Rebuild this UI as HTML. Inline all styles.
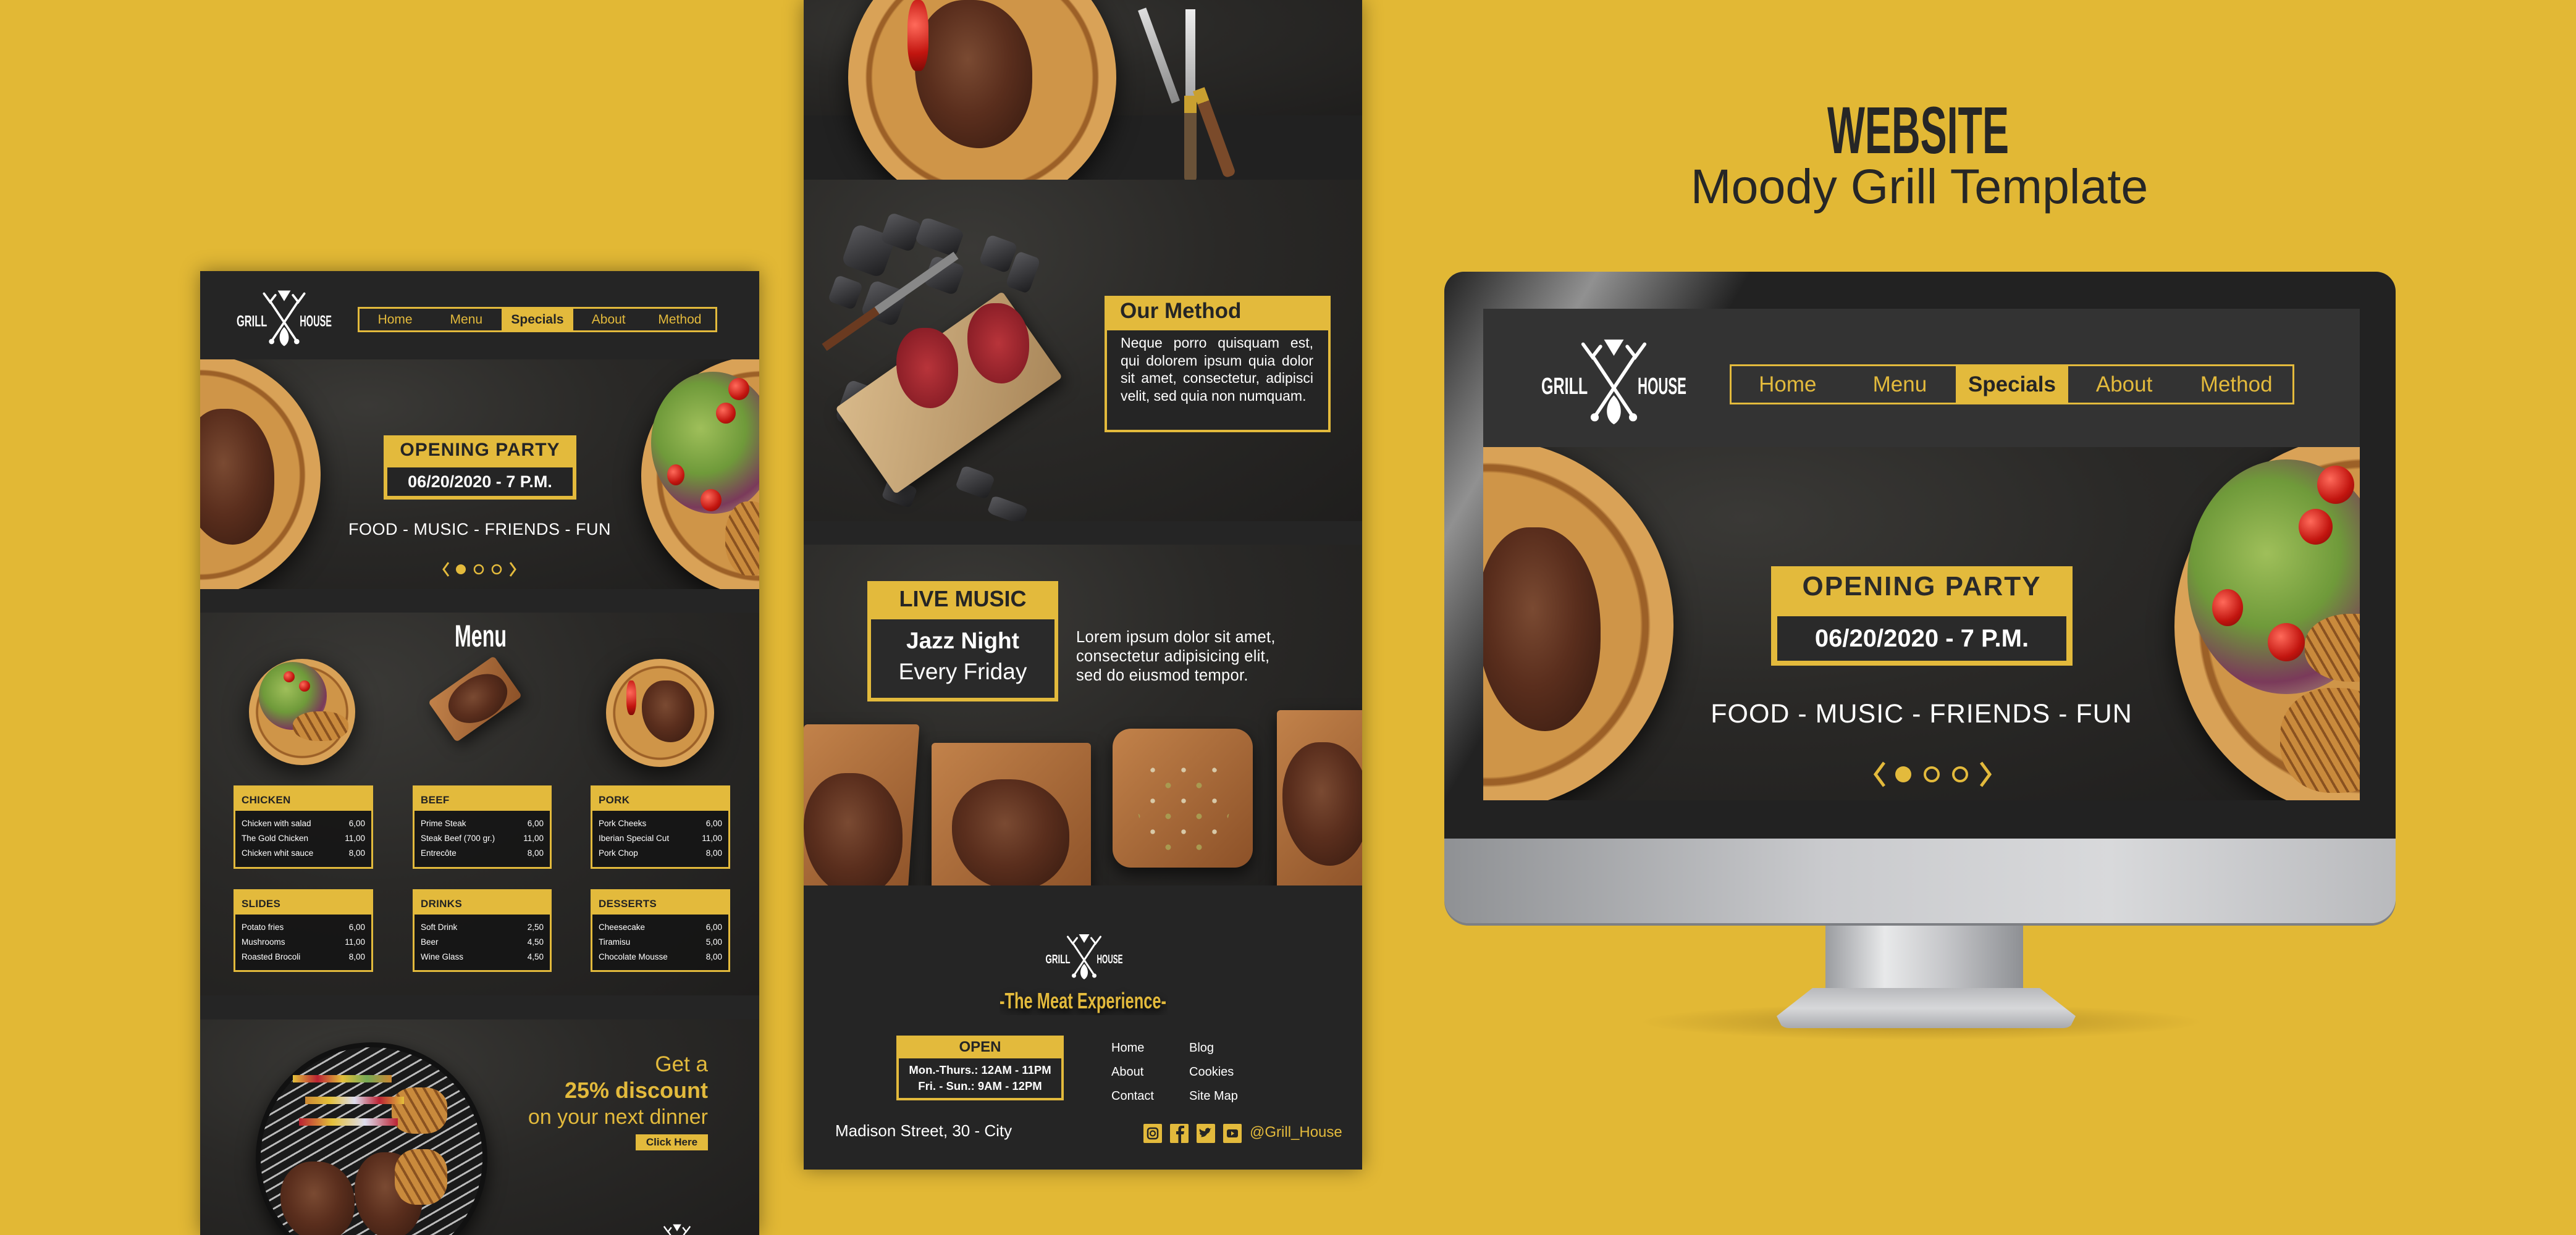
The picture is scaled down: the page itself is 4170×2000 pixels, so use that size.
<!DOCTYPE html>
<html><head><meta charset="utf-8">
<style>
*{margin:0;padding:0;box-sizing:border-box}
body{width:4170px;height:2000px;background:#e2b835;position:relative;overflow:hidden;font-family:"Liberation Sans",sans-serif}
.a{position:absolute}
.dark{background:#252525}
.tex{background:radial-gradient(ellipse at 30% 20%,#3a3936 0,#2a2927 45%,#1f1e1d 100%)}
.plate{position:absolute;border-radius:50%;background:radial-gradient(circle,#cf9548 0 58%,#9c6027 59% 61%,#d9a257 62% 86%,#b97a35 88% 96%,#8a5320 100%);box-shadow:0 12px 40px rgba(0,0,0,.7)}
.meat{position:absolute;border-radius:42% 50% 45% 55%;background:radial-gradient(ellipse at 45% 40%,#7a4a32 0,#5a2e1d 45%,#34190f 100%)}
.salad{position:absolute;border-radius:50%;background:radial-gradient(circle at 40% 40%,#9fbf5a 0,#6f9a3a 40%,#7a3a5a 70%,#c7c08a 100%)}
.tom{position:absolute;border-radius:50%;background:radial-gradient(circle at 35% 35%,#ff6a5a,#c2150f 60%,#7a0a06)}
.chick{position:absolute;border-radius:45%;background:repeating-linear-gradient(60deg,#c98a3c 0 10px,#8a5220 10px 14px)}
.y{color:#e3ba3c}
.ybg{background:#e3ba3c}
.card{position:absolute;border:3px solid #e3ba3c;background:rgba(20,20,20,.85)}
.card .h{background:#e3ba3c;height:38px;font-weight:bold;font-size:17px;color:#222;padding:11px 0 0 10px;letter-spacing:.3px}
.card .r{display:flex;justify-content:space-between;color:#fff;font-size:13.5px;line-height:24px;padding:0 10px}
.card .b{padding-top:9px}
.nav{position:absolute;border:3px solid #e3ba3c;display:flex;align-items:center;color:#e3ba3c}
.nav span{flex:1;text-align:center}
.nav .s{background:#e3ba3c;color:#252525;font-weight:bold;height:100%;display:flex;align-items:center;justify-content:center}
.ctr{text-align:center}
.board{position:absolute;background:linear-gradient(135deg,#c2824a,#8c5128);border-radius:6px;box-shadow:0 10px 25px rgba(0,0,0,.6)}
.coal{position:absolute;background:linear-gradient(135deg,#5a5a5e,#1c1c1e);border-radius:20%;transform:rotate(20deg)}
</style></head><body>

<!-- ================= LEFT PANEL ================= -->
<div class="a dark" style="left:324px;top:439px;width:905px;height:1561px;box-shadow:0 0 30px rgba(0,0,0,.4);overflow:hidden">
  <svg class="a" style="left:59px;top:30px" width="154" height="93" viewBox="0 0 250 150">
    <g stroke="#fff" stroke-width="6" fill="none" stroke-linecap="round">
      <line x1="88" y1="30" x2="158" y2="135"/><line x1="162" y1="30" x2="92" y2="135"/>
      <path d="M72 10 L88 32 L102 14"/><path d="M148 14 L162 32 L178 10"/>
    </g>
    <circle cx="92" cy="136" r="7" fill="#fff"/><circle cx="158" cy="136" r="7" fill="#fff"/>
    <path d="M108 2 L142 2 L125 30 Z" fill="#fff"/>
    <path d="M125 98 C108 115 110 140 125 148 C140 140 142 115 125 98 Z" fill="#fff"/>
    <text x="0" y="96" font-family="Liberation Sans" font-weight="bold" font-size="40" fill="#fff" textLength="80" lengthAdjust="spacingAndGlyphs">GRILL</text>
    <text x="166" y="96" font-family="Liberation Sans" font-weight="bold" font-size="40" fill="#fff" textLength="84" lengthAdjust="spacingAndGlyphs">HOUSE</text>
  </svg>
  <div class="nav" style="left:255px;top:58px;width:582px;height:41px;font-size:21px">
    <span>Home</span><span>Menu</span><span class="s">Specials</span><span>About</span><span>Method</span>
  </div>
  <div class="a tex" style="left:0;top:143px;width:905px;height:372px;overflow:hidden">
    <div class="plate" style="left:-195px;top:-8px;width:390px;height:390px"></div>
    <div class="meat" style="left:-30px;top:80px;width:150px;height:220px"></div>
    <div class="plate" style="left:714px;top:-6px;width:390px;height:390px"></div>
    <div class="salad" style="left:730px;top:20px;width:200px;height:230px"></div>
    <div class="tom" style="left:855px;top:30px;width:34px;height:36px"></div>
    <div class="tom" style="left:835px;top:70px;width:32px;height:34px"></div>
    <div class="tom" style="left:756px;top:170px;width:28px;height:34px"></div>
    <div class="tom" style="left:810px;top:210px;width:34px;height:36px"></div>
    <div class="chick" style="left:850px;top:230px;width:80px;height:120px"></div>
    <div class="a ybg" style="left:297px;top:123px;width:312px;height:104px"></div>
    <div class="a ctr" style="left:297px;top:130px;width:312px;font-size:30px;font-weight:bold;color:#252525;letter-spacing:1px">OPENING PARTY</div>
    <div class="a ctr" style="left:303px;top:175px;width:300px;height:46px;background:#252525;color:#fff;font-weight:bold;font-size:27px;line-height:46px">06/20/2020 - 7 P.M.</div>
    <div class="a ctr" style="left:0;top:260px;width:905px;color:#fff;font-size:27px;letter-spacing:.5px;font-weight:300">FOOD - MUSIC - FRIENDS - FUN</div>
    <svg class="a" style="left:390px;top:325px" width="125" height="30" viewBox="0 0 125 30">
      <path d="M12 4 L4 15 L12 26" stroke="#e3ba3c" stroke-width="3" fill="none"/>
      <circle cx="32" cy="15" r="8" fill="#e3ba3c"/>
      <circle cx="61" cy="15" r="7" stroke="#e3ba3c" stroke-width="2.5" fill="none"/>
      <circle cx="90" cy="15" r="7" stroke="#e3ba3c" stroke-width="2.5" fill="none"/>
      <path d="M112 4 L120 15 L112 26" stroke="#e3ba3c" stroke-width="3" fill="none"/>
    </svg>
  </div>
  <div class="a tex" style="left:0;top:553px;width:905px;height:620px;overflow:hidden">
    <svg class="a" style="left:412px;top:10px" width="85" height="55"><text x="0" y="45" font-family="Liberation Sans" font-weight="bold" font-size="50" fill="#fff" textLength="84" lengthAdjust="spacingAndGlyphs">Menu</text></svg>
    <div class="plate" style="left:79px;top:75px;width:172px;height:172px"></div>
    <div class="salad" style="left:95px;top:80px;width:110px;height:110px"></div>
    <div class="tom" style="left:135px;top:95px;width:18px;height:18px"></div>
    <div class="tom" style="left:160px;top:110px;width:18px;height:18px"></div>
    <div class="chick" style="left:150px;top:160px;width:90px;height:48px"></div>
    <div class="board" style="left:380px;top:100px;width:130px;height:80px;transform:rotate(-35deg)"></div>
    <div class="meat" style="left:400px;top:105px;width:100px;height:70px;transform:rotate(-35deg)"></div>
    <div class="plate" style="left:657px;top:75px;width:175px;height:175px"></div>
    <div class="meat" style="left:715px;top:110px;width:85px;height:100px"></div>
    <div class="tom" style="left:690px;top:110px;width:16px;height:56px;border-radius:40%"></div>

    <div class="card" style="left:54px;top:280px;width:226px;height:135px"><div class="h">CHICKEN</div><div class="b">
      <div class="r"><span>Chicken with salad</span><span>6,00</span></div><div class="r"><span>The Gold Chicken</span><span>11,00</span></div><div class="r"><span>Chicken whit sauce</span><span>8,00</span></div></div></div>
    <div class="card" style="left:344px;top:280px;width:225px;height:135px"><div class="h">BEEF</div><div class="b">
      <div class="r"><span>Prime Steak</span><span>6,00</span></div><div class="r"><span>Steak Beef (700 gr.)</span><span>11,00</span></div><div class="r"><span>Entrecôte</span><span>8,00</span></div></div></div>
    <div class="card" style="left:632px;top:280px;width:226px;height:135px"><div class="h">PORK</div><div class="b">
      <div class="r"><span>Pork Cheeks</span><span>6,00</span></div><div class="r"><span>Iberian Special Cut</span><span>11,00</span></div><div class="r"><span>Pork Chop</span><span>8,00</span></div></div></div>
    <div class="card" style="left:54px;top:448px;width:226px;height:134px"><div class="h">SLIDES</div><div class="b">
      <div class="r"><span>Potato fries</span><span>6,00</span></div><div class="r"><span>Mushrooms</span><span>11,00</span></div><div class="r"><span>Roasted Brocoli</span><span>8,00</span></div></div></div>
    <div class="card" style="left:344px;top:448px;width:225px;height:134px"><div class="h">DRINKS</div><div class="b">
      <div class="r"><span>Soft Drink</span><span>2,50</span></div><div class="r"><span>Beer</span><span>4,50</span></div><div class="r"><span>Wine Glass</span><span>4,50</span></div></div></div>
    <div class="card" style="left:632px;top:448px;width:226px;height:134px"><div class="h">DESSERTS</div><div class="b">
      <div class="r"><span>Cheesecake</span><span>6,00</span></div><div class="r"><span>Tiramisu</span><span>5,00</span></div><div class="r"><span>Chocolate Mousse</span><span>8,00</span></div></div></div>
  </div>
  <div class="a tex" style="left:0;top:1212px;width:905px;height:360px;overflow:hidden">
    <div class="a" style="left:90px;top:37px;width:375px;height:375px;border-radius:50%;background:repeating-linear-gradient(-30deg,#1a1a1a 0 12px,#bbb 12px 15px);border:8px solid #111;box-shadow:0 10px 30px rgba(0,0,0,.7)"></div>
    <div class="meat" style="left:130px;top:230px;width:120px;height:130px"></div>
    <div class="meat" style="left:250px;top:215px;width:110px;height:140px"></div>
    <div class="chick" style="left:310px;top:110px;width:90px;height:75px;border-radius:40%"></div>
    <div class="chick" style="left:315px;top:210px;width:85px;height:90px;border-radius:40%"></div>
    <div class="a" style="left:150px;top:90px;width:160px;height:12px;background:linear-gradient(90deg,#e4c03a,#b23,#e4c03a,#7a5,#c83)"></div>
    <div class="a" style="left:170px;top:125px;width:160px;height:12px;background:linear-gradient(90deg,#c83,#e4c03a,#dde,#b23,#e4c03a)"></div>
    <div class="a" style="left:160px;top:160px;width:160px;height:12px;background:linear-gradient(90deg,#b23,#e4c03a,#dde,#b23)"></div>
    <div class="a" style="left:500px;top:53px;width:322px;text-align:right;color:#e3ba3c;font-size:35px;line-height:40px">Get a</div>
    <div class="a" style="left:450px;top:94px;width:372px;text-align:right;color:#e3ba3c;font-size:36px;font-weight:bold;line-height:42px">25% discount</div>
    <div class="a" style="left:400px;top:138px;width:422px;text-align:right;color:#e3ba3c;font-size:34px;line-height:40px">on your next dinner</div>
    <div class="a ybg ctr" style="left:705px;top:186px;width:117px;height:26px;font-size:17px;font-weight:bold;line-height:26px;color:#222">Click Here</div>
    <svg class="a" style="left:722px;top:331px" width="100" height="60" viewBox="0 0 250 150">
      <g stroke="#fff" stroke-width="6" fill="none"><line x1="88" y1="30" x2="158" y2="135"/><line x1="162" y1="30" x2="92" y2="135"/><path d="M72 10 L88 32 L102 14"/><path d="M148 14 L162 32 L178 10"/></g>
      <path d="M108 2 L142 2 L125 30 Z" fill="#fff"/>
      <text x="0" y="96" font-family="Liberation Sans" font-weight="bold" font-size="40" fill="#fff" textLength="80" lengthAdjust="spacingAndGlyphs">GRILL</text>
      <text x="166" y="96" font-family="Liberation Sans" font-weight="bold" font-size="40" fill="#fff" textLength="84" lengthAdjust="spacingAndGlyphs">HOUSE</text>
    </svg>
  </div>
</div>

<!-- ================= MIDDLE PANEL ================= -->
<div class="a dark" style="left:1301px;top:0;width:904px;height:1894px;box-shadow:0 0 30px rgba(0,0,0,.4);overflow:hidden">
  <div class="a tex" style="left:0;top:0;width:904px;height:187px"></div>
  <div class="a" style="left:0;top:187px;width:904px;height:104px;background:#212121"></div>
  <div class="plate" style="left:72px;top:-90px;width:434px;height:430px"></div>
  <div class="meat" style="left:180px;top:0;width:190px;height:240px"></div>
  <div class="tom" style="left:168px;top:0;width:34px;height:115px;border-radius:40%"></div>
  <div class="a" style="left:568px;top:10px;width:14px;height:160px;background:linear-gradient(#ddd,#888);transform:rotate(-20deg)"></div>
  <div class="a" style="left:618px;top:15px;width:16px;height:140px;background:linear-gradient(#eee,#aaa)"></div>
  <div class="a" style="left:616px;top:155px;width:20px;height:140px;background:linear-gradient(#c9a030 0 20%,#6a5238 20%);border-radius:0 0 8px 8px"></div>
  <div class="a" style="left:655px;top:140px;width:20px;height:150px;background:linear-gradient(#c9a030 0 15%,#7a4a2a 15%);transform:rotate(-20deg);border-radius:0 0 8px 8px"></div>

  <div class="a tex" style="left:0;top:291px;width:904px;height:553px;overflow:hidden">
    <div class="coal" style="left:70px;top:80px;width:70px;height:70px"></div>
    <div class="coal" style="left:130px;top:60px;width:55px;height:50px"></div>
    <div class="coal" style="left:185px;top:70px;width:70px;height:45px"></div>
    <div class="coal" style="left:200px;top:130px;width:55px;height:50px"></div>
    <div class="coal" style="left:290px;top:95px;width:50px;height:50px"></div>
    <div class="coal" style="left:335px;top:120px;width:40px;height:60px"></div>
    <div class="coal" style="left:45px;top:160px;width:45px;height:45px"></div>
    <div class="coal" style="left:100px;top:170px;width:60px;height:60px"></div>
    <div class="coal" style="left:60px;top:330px;width:55px;height:70px"></div>
    <div class="coal" style="left:130px;top:490px;width:50px;height:35px"></div>
    <div class="coal" style="left:250px;top:470px;width:55px;height:40px"></div>
    <div class="coal" style="left:300px;top:520px;width:60px;height:30px"></div>
    <div class="a" style="left:10px;top:190px;width:260px;height:14px;background:linear-gradient(90deg,#6a3a20 0 40%,#888 40%);transform:rotate(-35deg)"></div>
    <div class="board" style="left:70px;top:260px;width:330px;height:170px;background:linear-gradient(135deg,#d8b98a,#a9875a);transform:rotate(-35deg)"></div>
    <div class="meat" style="left:150px;top:240px;width:100px;height:130px;background:radial-gradient(ellipse,#b8343a,#7a1620)"></div>
    <div class="meat" style="left:265px;top:200px;width:100px;height:130px;background:radial-gradient(ellipse,#b8343a,#7a1620)"></div>
    <div class="a ybg" style="left:487px;top:188px;width:366px;height:221px"></div>
    <div class="a" style="left:512px;top:193px;font-size:35px;font-weight:bold;color:#252525">Our Method</div>
    <div class="a" style="left:491px;top:244px;width:358px;height:161px;background:#252525;color:#fff;font-size:23px;line-height:28.5px;padding:6px 24px 0 22px;text-align:justify">Neque porro quisquam est, qui dolorem ipsum quia dolor sit amet, consectetur, adipisci velit, sed quia non numquam.</div>
  </div>
  <div class="a tex" style="left:0;top:882px;width:904px;height:552px;overflow:hidden">
    <div class="a ybg" style="left:103px;top:59px;width:309px;height:195px"></div>
    <div class="a ctr" style="left:103px;top:67px;width:309px;font-size:36px;font-weight:bold;color:#252525">LIVE MUSIC</div>
    <div class="a ctr" style="left:109px;top:121px;width:297px;height:127px;background:#2a2a2a;color:#fff;font-size:37px;line-height:50px;padding-top:10px"><b>Jazz Night</b><br>Every Friday</div>
    <div class="a" style="left:441px;top:135px;color:#fff;font-size:25.5px;line-height:31px;letter-spacing:.3px">Lorem ipsum dolor sit amet,<br>consectetur adipisicing elit,<br>sed do eiusmod tempor.</div>
    <div class="board" style="left:-10px;top:291px;width:187px;height:300px;transform:skewX(-4deg)"></div>
    <div class="meat" style="left:0;top:370px;width:160px;height:200px"></div>
    <div class="board" style="left:207px;top:321px;width:258px;height:260px"></div>
    <div class="meat" style="left:240px;top:380px;width:190px;height:180px"></div>
    <div class="board" style="left:500px;top:298px;width:227px;height:225px;border-radius:30px"></div>
    <div class="a" style="left:540px;top:340px;width:150px;height:160px;border-radius:50%;background:radial-gradient(circle,#d8c9a8 0 10%,transparent 11%) 0 0/50px 50px,radial-gradient(circle,#a89a50 0 12%,transparent 13%) 25px 25px/50px 50px"></div>
    <div class="board" style="left:766px;top:268px;width:150px;height:300px"></div>
    <div class="meat" style="left:775px;top:320px;width:140px;height:200px"></div>
  </div>
  <svg class="a" style="left:391px;top:1512px" width="126" height="75" viewBox="0 0 250 150">
    <g stroke="#fff" stroke-width="6" fill="none" stroke-linecap="round"><line x1="88" y1="30" x2="158" y2="135"/><line x1="162" y1="30" x2="92" y2="135"/><path d="M72 10 L88 32 L102 14"/><path d="M148 14 L162 32 L178 10"/></g>
    <circle cx="92" cy="136" r="7" fill="#fff"/><circle cx="158" cy="136" r="7" fill="#fff"/>
    <path d="M108 2 L142 2 L125 30 Z" fill="#fff"/>
    <path d="M125 98 C108 115 110 140 125 148 C140 140 142 115 125 98 Z" fill="#fff"/>
    <text x="0" y="96" font-family="Liberation Sans" font-weight="bold" font-size="40" fill="#fff" textLength="80" lengthAdjust="spacingAndGlyphs">GRILL</text>
    <text x="166" y="96" font-family="Liberation Sans" font-weight="bold" font-size="40" fill="#fff" textLength="84" lengthAdjust="spacingAndGlyphs">HOUSE</text>
  </svg>
  <svg class="a" style="left:317px;top:1598px" width="272" height="46"><text x="0" y="35" font-family="Liberation Sans" font-weight="bold" font-size="36" fill="#e3ba3c" textLength="270" lengthAdjust="spacingAndGlyphs" style="filter:drop-shadow(0 6px 6px #000)">-The Meat Experience-</text></svg>
  <div class="a ybg" style="left:150px;top:1677px;width:271px;height:105px"></div>
  <div class="a ctr" style="left:150px;top:1682px;width:271px;font-size:24px;font-weight:bold;color:#252525">OPEN</div>
  <div class="a ctr" style="left:154px;top:1714px;width:263px;height:64px;background:#252525;color:#fff;font-size:18.5px;font-weight:bold;line-height:26px;padding-top:6px">Mon.-Thurs.: 12AM - 11PM<br>Fri. - Sun.: 9AM - 12PM</div>
  <div class="a" style="left:498px;top:1678px;color:#fff;font-size:20px;line-height:39px">Home<br>About<br>Contact</div>
  <div class="a" style="left:624px;top:1678px;color:#fff;font-size:20px;line-height:39px">Blog<br>Cookies<br>Site Map</div>
  <div class="a" style="left:51px;top:1816px;color:#fff;font-size:26px">Madison Street, 30 - City</div>
  <svg class="a" style="left:550px;top:1820px" width="130" height="31" viewBox="0 0 130 31">
    <rect x="0" y="0" width="30" height="31" rx="2" fill="#e3ba3c"/><rect x="7" y="7" width="16" height="17" rx="4" stroke="#252525" stroke-width="2.5" fill="none"/><circle cx="15" cy="15.5" r="4" stroke="#252525" stroke-width="2.2" fill="none"/>
    <rect x="43" y="0" width="30" height="31" rx="2" fill="#e3ba3c"/><path d="M61 31 V17 H65 L66 12 H61 V9 C61 7.5 62 7 63 7 H66 V3 H62 C58 3 56.5 5 56.5 9 V12 H53 V17 H56.5 V31 Z" fill="#252525"/>
    <rect x="86" y="0" width="30" height="31" rx="2" fill="#e3ba3c"/><path d="M92 21 C97 22 101 20 103 16 C106 15 108 12 108 9 L110 7 L107 8 C106 6 103 6 101 8 C100 9 100 11 100 12 C96 12 93 10 91 8 C90 11 91 13 93 15 L91 14.5 C91 17 93 18 95 19 L93 19.5 C94 20.5 95 21 92 21 Z" fill="#252525"/>
  </svg>
  <svg class="a" style="left:679px;top:1820px" width="31" height="31"><rect width="30" height="31" rx="2" fill="#e3ba3c"/><rect x="6" y="9" width="18" height="13" rx="3" fill="#252525"/><path d="M13 12 L18 15.5 L13 19 Z" fill="#e3ba3c"/></svg>
  <div class="a y" style="left:722px;top:1820px;font-size:24px">@Grill_House</div>
</div>

<!-- ================= TITLE ================= -->
<svg class="a" style="left:2950px;top:160px" width="310" height="100"><text x="155" y="88" text-anchor="middle" font-family="Liberation Sans" font-weight="bold" font-size="108" fill="#262626" textLength="294" lengthAdjust="spacingAndGlyphs">WEBSITE</text></svg>
<div class="a ctr" style="left:2600px;top:254px;width:1014px;font-size:79px;color:#262626;line-height:96px">Moody Grill Template</div>

<!-- ================= MONITOR ================= -->
<div class="a" style="left:2650px;top:1625px;width:920px;height:60px;border-radius:50%;background:radial-gradient(ellipse,rgba(120,90,20,.45),rgba(120,90,20,0) 70%)"></div>
<div class="a" style="left:2955px;top:1490px;width:320px;height:150px;background:linear-gradient(90deg,#9a9ca0,#e8e9ea 30%,#c6c7ca 60%,#8e9094);clip-path:polygon(0 0,100% 0,100% 40%,127% 100%,-25% 100%,0 40%)"></div>
<div class="a" style="left:2876px;top:1600px;width:484px;height:65px;background:linear-gradient(180deg,#b8b9bc,#d7d8da 50%,#a9aaae);border-radius:0 0 20px 20px;clip-path:polygon(12% 0,88% 0,100% 70%,98% 100%,2% 100%,0 70%)"></div>
<div class="a" style="left:2338px;top:440px;width:1540px;height:1055px;border-radius:32px 32px 40px 40px;background:linear-gradient(180deg,#9fa1a5 0,#d2d3d6 50%,#a2a4a8 100%);overflow:hidden;box-shadow:0 4px 0 #7d7f83">
  <div class="a" style="left:0;top:0;width:1540px;height:918px;background:#222222"></div>
  <div class="a" style="left:0;top:0;width:1540px;height:918px;background:linear-gradient(120deg,rgba(255,255,255,.0) 0,rgba(255,255,255,.5) 12%,rgba(255,255,255,0) 24%)"></div>
  <div class="a" style="left:0;top:918px;width:1540px;height:137px;background:linear-gradient(90deg,#8f9194,#c9cacd 40%,#d8d9db 70%,#b9babd)"></div>
</div>
<div class="a" style="left:2401px;top:500px;width:1419px;height:796px;background:#333333;overflow:hidden">
  <svg class="a" style="left:94px;top:46px" width="235" height="145" viewBox="0 0 250 150">
    <g stroke="#fff" stroke-width="6" fill="none" stroke-linecap="round"><line x1="88" y1="30" x2="158" y2="135"/><line x1="162" y1="30" x2="92" y2="135"/><path d="M72 10 L88 32 L102 14"/><path d="M148 14 L162 32 L178 10"/></g>
    <circle cx="92" cy="136" r="7" fill="#fff"/><circle cx="158" cy="136" r="7" fill="#fff"/>
    <path d="M108 2 L142 2 L125 30 Z" fill="#fff"/>
    <path d="M125 98 C108 115 110 140 125 148 C140 140 142 115 125 98 Z" fill="#fff"/>
    <text x="0" y="96" font-family="Liberation Sans" font-weight="bold" font-size="40" fill="#fff" textLength="80" lengthAdjust="spacingAndGlyphs">GRILL</text>
    <text x="166" y="96" font-family="Liberation Sans" font-weight="bold" font-size="40" fill="#fff" textLength="84" lengthAdjust="spacingAndGlyphs">HOUSE</text>
  </svg>
  <div class="nav" style="left:399px;top:90px;width:914px;height:65px;font-size:35px">
    <span>Home</span><span>Menu</span><span class="s">Specials</span><span>About</span><span>Method</span>
  </div>
  <div class="a tex" style="left:0;top:224px;width:1419px;height:572px;overflow:hidden">
    <div class="plate" style="left:-292px;top:-12px;width:600px;height:600px"></div>
    <div class="meat" style="left:-10px;top:130px;width:200px;height:330px"></div>
    <div class="plate" style="left:1119px;top:-20px;width:620px;height:620px"></div>
    <div class="salad" style="left:1140px;top:20px;width:320px;height:380px"></div>
    <div class="tom" style="left:1350px;top:30px;width:60px;height:62px"></div>
    <div class="tom" style="left:1320px;top:100px;width:55px;height:58px"></div>
    <div class="tom" style="left:1180px;top:230px;width:50px;height:60px"></div>
    <div class="tom" style="left:1270px;top:285px;width:60px;height:62px"></div>
    <div class="chick" style="left:1330px;top:270px;width:160px;height:110px"></div>
    <div class="chick" style="left:1290px;top:390px;width:180px;height:170px"></div>
    <div class="a ybg" style="left:466px;top:193px;width:488px;height:161px"></div>
    <div class="a ctr" style="left:466px;top:201px;width:488px;font-size:44px;font-weight:bold;color:#2a2a2a;letter-spacing:2px">OPENING PARTY</div>
    <div class="a ctr" style="left:476px;top:274px;width:468px;height:72px;background:#2a2a2a;color:#fff;font-size:40px;font-weight:bold;line-height:72px">06/20/2020 - 7 P.M.</div>
    <div class="a ctr" style="left:0;top:408px;width:1419px;color:#fff;font-size:43px;font-weight:300;letter-spacing:1px">FOOD - MUSIC - FRIENDS - FUN</div>
    <svg class="a" style="left:625px;top:505px" width="210" height="50" viewBox="0 0 210 50">
      <path d="M24 6 L10 25 L24 44" stroke="#e3ba3c" stroke-width="5" fill="none"/>
      <circle cx="55" cy="25" r="13" fill="#e3ba3c"/>
      <circle cx="101" cy="25" r="11" stroke="#e3ba3c" stroke-width="4" fill="none"/>
      <circle cx="147" cy="25" r="11" stroke="#e3ba3c" stroke-width="4" fill="none"/>
      <path d="M181 6 L195 25 L181 44" stroke="#e3ba3c" stroke-width="5" fill="none"/>
    </svg>
  </div>
</div>
</body></html>
